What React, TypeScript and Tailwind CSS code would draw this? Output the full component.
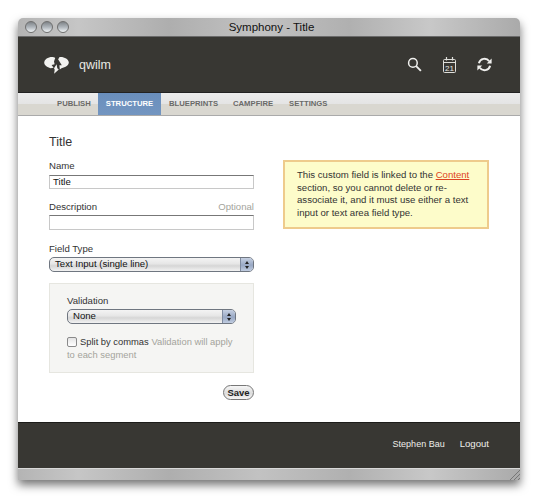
import React from "react";

const metal = "bg-[linear-gradient(90deg,#b4b4b4_0%,#c6c6c6_12%,#aeaeae_30%,#c2c2c2_48%,#b0b0b0_66%,#c8c8c8_82%,#aaaaaa_100%)]";

function Light() {
  return (
    <span className="w-[12px] h-[12px] rounded-full border border-[#6f6f6f] bg-[linear-gradient(180deg,#7f8488_0%,#aeb4ba_50%,#f0f4f6_100%)]" />
  );
}

function Stepper() {
  return (
    <span className="flex flex-col items-center justify-center gap-[2px] w-[13px] h-full rounded-r-[4px] border-l border-[#7f8ba0] bg-[linear-gradient(180deg,#c6d0e2_0%,#98a8c4_55%,#c0cce0_100%)]">
      <span className="w-0 h-0 border-x-[2px] border-x-transparent border-b-[3px] border-b-[#222]" />
      <span className="w-0 h-0 border-x-[2px] border-x-transparent border-t-[3px] border-t-[#222]" />
    </span>
  );
}

function Select({ label }: { label: string }) {
  return (
    <div className="flex items-center justify-between h-[15px] rounded-[5px] border border-[#6f7680] bg-[linear-gradient(180deg,#f4f4f4_0%,#e6e6e6_45%,#d6d6d6_60%,#f2f2f2_100%)] text-[9.6px] text-[#111]">
      <span className="pl-[5px]">{label}</span>
      <Stepper />
    </div>
  );
}

function Logo() {
  return (
    <svg width="25" height="18" viewBox="0 0 25 18" fill="#f2f2f0">
      <path d="M8 1C4 1 .4 3.4.2 6.6c0 2.8 3 4.8 6.4 5.6l3-.4-2-2.8 3-.8-.6-2.8L11.2 2C10.4 1.3 9.2 1 8 1z" />
      <path d="M15.5 1c4.5-.5 9 2 9.3 5.3.2 3-3.3 5.2-7.3 5.9l-1.7 1.3-.4-4.3h2.4l-3.7-6L15 2z" />
      <path d="M10 12.2l2.6-4 .7 4.1 1.5 1.2-4.7 4.3.6-4z" />
    </svg>
  );
}

function Calendar() {
  return (
    <svg width="15" height="18" viewBox="0 0 15 18" fill="none" stroke="#dededa">
      <rect x="1.5" y="3.5" width="12" height="13" rx="1" />
      <path d="M1.5 6.5h12" />
      <path d="M4.5 1v3.5M10.5 1v3.5" strokeWidth="1.2" />
      <text x="7.5" y="14.6" textAnchor="middle" fill="#e6e6e4" stroke="none" fontSize="8" fontFamily="'Liberation Sans', sans-serif">21</text>
    </svg>
  );
}

function Search() {
  return (
    <svg width="15" height="15" viewBox="0 0 16 16" fill="none" stroke="#f0f0ee">
      <circle cx="6.3" cy="6.3" r="4.6" strokeWidth="1.6" />
      <path d="M9.8 9.8l5 5" strokeWidth="2" />
    </svg>
  );
}

function Sync() {
  return (
    <svg width="15" height="15" viewBox="0 0 15 15" fill="none" stroke="#f0f0ee" strokeWidth="1.9">
      <path d="M1.9 6.2A5.7 5.7 0 0 1 12.2 4.3" />
      <path d="M13.1 8.8A5.7 5.7 0 0 1 2.8 10.7" />
      <path d="M14.6 1.6v5h-4.8z" fill="#f0f0ee" stroke="none" />
      <path d="M.4 13.4v-5h4.8z" fill="#f0f0ee" stroke="none" />
    </svg>
  );
}

export default function App() {
  return (
    <div className="w-[540px] h-[501px] bg-white pt-[18px] pl-[18px] overflow-hidden font-['Liberation_Sans',sans-serif]">
      <div className="w-[502px] flex flex-col rounded-t-[5px] shadow-[0_5px_10px_rgba(0,0,0,0.55)]">
        {/* title bar */}
        <div className={`relative h-[19px] rounded-t-[5px] flex items-center pl-[7px] gap-[4px] border-b border-[#6a6a6a] ${metal}`}>
          <Light />
          <Light />
          <Light />
          <span className="flex-1 text-center pr-[50px] pt-[1px] text-[11.5px] text-[#111]">Symphony - Title</span>
        </div>
        {/* header */}
        <div className="h-[55px] bg-[#383733] flex items-center pl-[26px] pr-[28px]">
          <Logo />
          <span className="ml-[10px] pt-[2px] text-[12.5px] text-[#e8e8e4]">qwilm</span>
          <div className="ml-auto flex items-center gap-[20px]">
            <Search />
            <Calendar />
            <Sync />
          </div>
        </div>
        {/* nav */}
        <div className="h-[24px] flex pl-[39px] text-[7.7px] font-bold text-[#6a6a68] border-t border-[#222] border-b-[1px] border-b-[#aaa] bg-[linear-gradient(180deg,#ececec_0%,#e4e4e4_50%,#d9d7d0_52%,#d9d7d0_100%)]">
          <span className="flex items-center w-[41px]">PUBLISH</span>
          <span className="flex items-center w-[63px] justify-center text-white bg-[linear-gradient(180deg,#6a8fbd_0%,#7395c0_100%)]">STRUCTURE</span>
          <span className="flex items-center w-[72px] pl-[8px]">BLUEPRINTS</span>
          <span className="flex items-center w-[56px]">CAMPFIRE</span>
          <span className="flex items-center">SETTINGS</span>
        </div>
        {/* body */}
        <div className="h-[306px] bg-white flex pl-[31px] pr-[31px] pt-[19px] text-[#333]">
          <div className="w-[205px] text-[9.6px]">
            <h1 className="text-[12.5px] leading-[15px] font-normal text-[#333] mb-[10px]">Title</h1>
            <div className="leading-[11px] mb-[4px]">Name</div>
            <div className="h-[14px] border border-[#c8c8c8] border-t-[#777] flex items-center pl-[3px] text-[#111]">Title</div>
            <div className="flex justify-between leading-[11px] mt-[12px] mb-[3px]">
              <span>Description</span>
              <span className="text-[#a4a49c]">Optional</span>
            </div>
            <div className="h-[15px] border border-[#c8c8c8] border-t-[#777]" />
            <div className="leading-[11px] mt-[13px] mb-[3px]">Field Type</div>
            <Select label="Text Input (single line)" />
            <div className="mt-[11px] h-[90px] border border-[#e6e6e0] bg-[#f5f5f3] pt-[11px] pl-[17px] pr-[14px]">
              <div className="leading-[11px] mb-[3px]">Validation</div>
              <div className="mr-[3px]">
                <Select label="None" />
              </div>
              <div className="mt-[11px] leading-[13px] text-[9.4px] text-[#a4a49c]">
                <span className="inline-block align-[-2px] w-[10px] h-[10px] mr-[3px] rounded-[2px] border border-[#8a8a8a] bg-[linear-gradient(180deg,#e4e4e4,#ffffff)]" />
                <span className="text-[#333]">Split by commas</span> Validation will apply to each segment
              </div>
            </div>
            <div className="flex justify-end mt-[12px]">
              <button className="h-[15px] w-[31px] rounded-full border border-[#777] bg-[linear-gradient(180deg,#f6f6f6_0%,#dcdcdc_55%,#f6f6f6_100%)] text-[9.5px] font-bold text-[#222] leading-none">Save</button>
            </div>
          </div>
          <div className="ml-[29px] mt-[25px] w-[206px] h-[69px] border-[2px] border-[#eecb8c] bg-[#fdfcca] px-[12px] py-[7px] text-[9.6px] leading-[12.5px] text-[#333]">
            This custom field is linked to the <span className="text-[#dd4422] underline">Content</span> section, so you cannot delete or re-associate it, and it must use either a text input or text area field type.
          </div>
        </div>
        {/* footer */}
        <div className="h-[46px] bg-[#383733] border-t border-[#1c1c1a] flex items-center justify-end pr-[31px] pb-[3px] text-[#eeeeea]">
          <div className="flex items-baseline gap-[15px] text-[9.6px]">
            <span className="text-[9px]">Stephen Bau</span>
            <span>Logout</span>
          </div>
        </div>
        {/* bottom metal */}
        <div className={`relative h-[12px] border-t border-[#d8d8d8] ${metal}`}>
          <svg className="absolute right-0 bottom-0" width="10" height="10" viewBox="0 0 10 10" stroke="#777">
            <path d="M0 10L10 0M4 10l6-6M8 10l2-2" />
          </svg>
        </div>
      </div>
    </div>
  );
}
